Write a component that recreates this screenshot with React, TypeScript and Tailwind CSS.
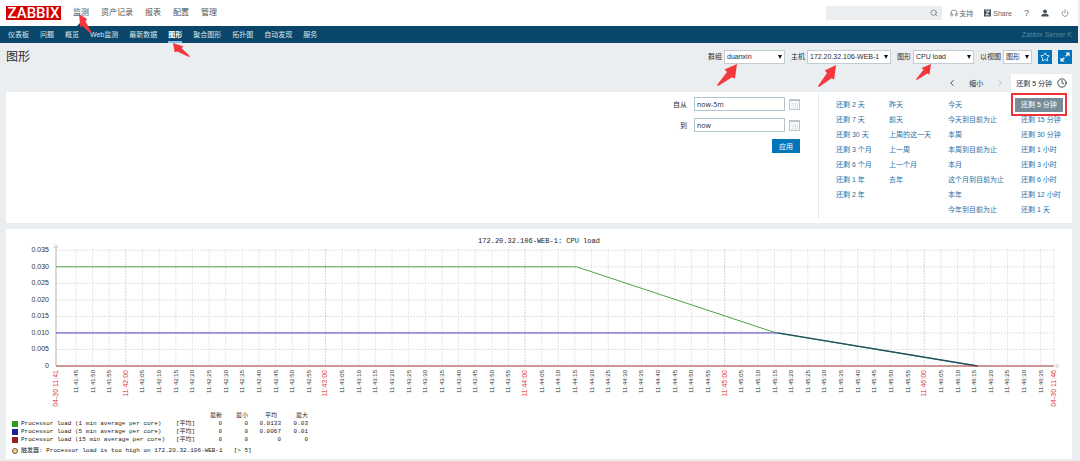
import { ChevronLeft, ChevronRight, Clock, Headphones, Power, Search, Star } from "lucide-react";
import type { ReactNode } from "react";

const MAIN_MENU = ["监测", "资产记录", "报表", "配置", "管理"];

const SUB_MENU = [
  "仪表板",
  "问题",
  "概览",
  "Web监测",
  "最新数据",
  "图形",
  "聚合图形",
  "拓扑图",
  "自动发现",
  "服务",
];

const RANGES = [
  ["还剩 2 天", "还剩 7 天", "还剩 30 天", "还剩 3 个月", "还剩 6 个月", "还剩 1 年", "还剩 2 年"],
  ["昨天", "前天", "上周的这一天", "上一周", "上一个月", "去年"],
  ["今天", "今天到目前为止", "本周", "本周到目前为止", "本月", "这个月到目前为止", "本年", "今年到目前为止"],
  ["还剩 5 分钟", "还剩 15 分钟", "还剩 30 分钟", "还剩 1 小时", "还剩 3 小时", "还剩 6 小时", "还剩 12 小时", "还剩 1 天"],
];

const RANGE_WIDTHS = ["w-[53px]", "w-[59px]", "w-[73px]", "w-[46px]"];

const SERIES = [
  { name: "Processor load (1 min average per core)", swatch: "bg-[#2f9a22]", values: ["0", "0", "0.0133", "0.03"] },
  { name: "Processor load (5 min average per core)", swatch: "bg-[#1f1f96]", values: ["0", "0", "0.0067", "0.01"] },
  { name: "Processor load (15 min average per core)", swatch: "bg-[#981c1c]", values: ["0", "0", "0", "0"] },
];

type ArrowProps = { className: string; flip?: boolean };

/** Red pointer laid over a control; the tip is in the upper right corner unless flipped */
function Arrow({ className, flip }: ArrowProps) {
  return (
    <svg viewBox="0 0 20 22" preserveAspectRatio="none" className={`pointer-events-none absolute z-10 ${className}`} aria-hidden="true">
      <path
        d="M20 0 L7.5 5.5 L10 8 L0 21 L1.2 22 L15 13.2 L18 14.500 Z"
        fill="#f2383c"
        transform={flip ? "translate(20 0) scale(-1 1)" : undefined}
      />
    </svg>
  );
}

type FieldProps = { id: string; label: string; value: string; width: string; children?: ReactNode };

function SelectField({ id, label, value, width, children }: FieldProps) {
  return (
    <div className="flex items-center gap-[2px]">
      <label htmlFor={id}>{label}</label>
      <div className={`relative ${width}`}>
        <select
          id={id}
          defaultValue={value}
          className="block h-[14px] w-full appearance-none border border-[#c3ccd0] bg-white pl-[2px] text-[7px] leading-[12px] text-[#1f2c33]"
        >
          <option>{value}</option>
        </select>
        <svg viewBox="0 0 4 4" className="pointer-events-none absolute top-[5px] right-[3px] size-1" aria-hidden="true">
          <path d="M0 0h4L2 4z" fill="#111" />
        </svg>
        {children}
      </div>
    </div>
  );
}

function CalendarIcon() {
  return (
    <svg viewBox="0 0 11 11" className="size-[11px]" aria-hidden="true">
      <rect x=".5" y=".5" width="10" height="10" fill="#fff" stroke="#bcc5ca" />
      <path d="M0 1.5h11" stroke="#bcc5ca" strokeWidth="1.5" />
      <path d="M2.5 4.8h6.5M2.5 6.8h6.5M2.5 8.8h6.5" stroke="#a9b4ba" strokeWidth=".8" strokeDasharray="1 .8" />
    </svg>
  );
}

function DateField({ id, label, value }: { id: string; label: string; value: string }) {
  return (
    <div className="flex items-center">
      <label htmlFor={id} className="w-[21px] pr-[7px] text-right whitespace-nowrap">
        {label}
      </label>
      <input
        id={id}
        defaultValue={value}
        className="h-[14px] w-[91px] border border-[#b3c6cf] bg-white px-[2px] font-['Open_Sans'] text-[7px] text-[#1f2c33]"
      />
      <button type="button" aria-label={label} className="ml-1">
        <CalendarIcon />
      </button>
    </div>
  );
}

function Header() {
  return (
    <header>
      <div className="flex h-[26px] items-center bg-white pr-[9px] pl-[6px]">
        <a href="#" className="flex h-[14px] w-[55px] items-center justify-center bg-[#d40000] font-['Roboto'] text-[15px] leading-[14px] font-medium text-white">
          ZABBIX
        </a>
        <nav className="ml-3 flex h-full gap-3 text-[8px] text-[#4b5459]">
          {MAIN_MENU.map((item, i) => (
            <a key={item} href="#" className="relative flex items-center">
              {item}
              {i === 0 && (
                <>
                  <svg viewBox="0 0 8 4" className="absolute bottom-0 left-1 h-1 w-2" aria-hidden="true">
                    <path d="M0 4 4 0l4 4z" fill="#0a466a" />
                  </svg>
                  <Arrow flip className="top-[14px] left-[6px] h-[20px] w-[13px]" />
                </>
              )}
            </a>
          ))}
        </nav>
        <div className="ml-auto flex items-center text-[7px] text-[#5c666b]">
          <div className="relative mr-2 w-[116px]">
            <input aria-label="搜索" className="block h-[14px] w-full bg-[#ebeef0] px-1" />
            <Search className="absolute top-[3px] right-[4px] size-2" />
          </div>
          <a href="#" className="flex items-center gap-px">
            <Headphones className="size-2" />
            支持
          </a>
          <a href="#" className="ml-[11px] flex items-center gap-px">
            <svg viewBox="0 0 8 8" className="size-2" aria-hidden="true">
              <rect y=".5" width="7" height="7" fill="#44545f" />
              <path d="M1.8 2.2h3.4L1.8 5.8h3.4" fill="none" stroke="#fff" />
            </svg>
            Share
          </a>
          <a href="#" className="ml-3 text-[9px]">
            ?
          </a>
          <a href="#" aria-label="用户" className="ml-3">
            <svg viewBox="0 0 8 8" className="size-2" fill="#44545f" aria-hidden="true">
              <circle cx="4" cy="2.4" r="1.9" />
              <path d="M.5 7.5V6.2Q.8 5 3 4.8h2Q7.200 5 7.500 6.200V7.500z" />
            </svg>
          </a>
          <a href="#" aria-label="退出" className="ml-3">
            <Power className="size-2" />
          </a>
        </div>
      </div>
      <nav className="flex h-[17px] items-stretch gap-[11px] bg-[#0a466a] pr-[6px] pl-2 text-[7px] text-[#d9e6ee]">
        {SUB_MENU.map((item) => (
          <a
            key={item}
            href="#"
            className={item === "图形" ? "relative flex items-center border-b-2 border-[#7fc0ee] pt-[2px] font-bold text-white" : "flex items-center"}
          >
            {item}
            {item === "图形" && <Arrow flip className="top-[17px] left-[5px] h-[14px] w-[17px]" />}
          </a>
        ))}
        <span className="ml-auto self-center text-[#5686a3]">Zabbix Server K</span>
      </nav>
    </header>
  );
}

function TitleBar() {
  return (
    <div className="flex h-[27px] items-center pl-[6px]">
      <h1 className="text-[12px] text-[#1f2c33]">图形</h1>
      <form className="ml-auto flex items-center gap-[6px] text-[7px]">
        <SelectField id="group" label="群组" value="duanxin" width="w-[61px]">
          <Arrow className="top-[14px] left-[-7px] h-[22px] w-[20px]" />
        </SelectField>
        <SelectField id="host" label="主机" value="172.20.32.106-WEB-1" width="w-[84px]">
          <Arrow className="top-[15px] left-[11px] h-[22px] w-[18px]" />
        </SelectField>
        <SelectField id="graph" label="图形" value="CPU load" width="w-[61px]">
          <Arrow className="top-[14px] left-[3px] h-[16px] w-[15px]" />
        </SelectField>
        <SelectField id="view" label="以视图" value="图形" width="w-[29px]" />
        <button type="button" aria-label="收藏" className="flex size-[14px] items-center justify-center bg-[#0275b8] text-white">
          <Star className="size-[10px]" />
        </button>
        <button type="button" aria-label="全屏" className="flex size-[14px] items-center justify-center bg-[#0275b8]">
          <svg viewBox="0 0 14 14" className="size-[14px]" aria-hidden="true">
            <path d="M7.500 2.500H11.500V6.500ZM2.500 7.500V11.500H6.500Z" fill="#fff" />
            <path d="M10.500 3.500 7.700 6.300M3.500 10.500 6.300 7.700" stroke="#fff" strokeWidth="1.300" />
          </svg>
        </button>
      </form>
    </div>
  );
}

function TimeFilter() {
  return (
    <section>
      <div className="flex h-[22px] items-end justify-end text-[7px]">
        <div className="flex h-[18px] items-center">
          <button type="button" aria-label="上一段">
            <ChevronLeft className="size-[10px]" />
          </button>
          <button type="button" className="mx-3">
            缩小
          </button>
          <button type="button" aria-label="下一段" className="text-[#b5bdc2]">
            <ChevronRight className="size-[10px]" />
          </button>
        </div>
        <button type="button" className="ml-[6px] flex h-[18px] items-center gap-[5px] bg-white px-[5px]">
          还剩 5 分钟
          <Clock className="size-[10px]" />
        </button>
      </div>
      <div className="flex justify-end bg-white pt-[2px] pr-[5px] pb-[5px] text-[7px]">
        <form className="flex flex-col gap-[7px] pt-[3px]">
          <DateField id="from" label="自从" value="now-5m" />
          <DateField id="to" label="到" value="now" />
          <button type="button" className="h-[14px] w-7 self-end bg-[#0275b8] text-white">
            应用
          </button>
        </form>
        <div className="ml-[18px] flex h-[124px] border-l border-[#e3e7e9] pt-[3px] pl-[17px]">
          {RANGES.map((column, c) => (
            <ul key={c} className={`${RANGE_WIDTHS[c]} whitespace-nowrap`}>
              {column.map((range) => (
                <li key={range} className="flex h-[15px] items-center">
                  {range === "还剩 5 分钟" ? (
                    <a href="#" className="relative -ml-[6px] flex h-[14px] items-center bg-[#768d99] px-[6px] text-white">
                      {range}
                      <span className="pointer-events-none absolute -inset-x-[4px] -top-[5px] -bottom-[4px] border-2 border-[#ee3338]" />
                    </a>
                  ) : (
                    <a href="#" className="text-[#1f6fa8]">
                      {range}
                    </a>
                  )}
                </li>
              ))}
            </ul>
          ))}
        </div>
      </div>
    </section>
  );
}

// Plot geometry, in the units of the chart's viewBox
const LEFT = 50;
const RIGHT = 1048;
const BASE = 137;
const STEP_Y = 16.53;
const START = 39; // seconds after 11:41:00
const SPAN = 300;

const toX = (seconds: number) => LEFT + ((seconds - START) * (RIGHT - LEFT)) / SPAN;
const toY = (load: number) => BASE - (load / 0.005) * STEP_Y;

const TICKS = Array.from({ length: 59 }, (_, i) => 45 + i * 5);

function tickLabel(seconds: number) {
  const minute = 41 + Math.floor(seconds / 60);
  return `11:${minute}:${String(seconds % 60).padStart(2, "0")}`;
}

function XLabel({ x, text, major }: { x: number; text: string; major: boolean }) {
  return (
    <text
      transform={`translate(${x + 2} 141) rotate(-90)`}
      textAnchor="end"
      className={major ? "fill-[#e03a3a] text-[7px]" : "fill-[#333] text-[6px]"}
    >
      {text}
    </text>
  );
}

function LoadChart() {
  const path = (points: number[][]) => points.map(([s, v]) => `${toX(s)},${toY(v)}`).join(" ");

  return (
    <svg viewBox="0 0 1066 183" className="block h-auto w-full" role="img" aria-label="CPU load">
      <text x="533" y="14" textAnchor="middle" className="fill-[#222] font-['Liberation_Mono'] text-[7px]">
        172.20.32.106-WEB-1: CPU load
      </text>

      {/* grid */}
      {Array.from({ length: 8 }, (_, i) => (
        <g key={i}>
          {i > 0 && <path d={`M${LEFT} ${toY(i * 0.005)}H${RIGHT}`} stroke="#d6d6d6" strokeWidth=".7" strokeDasharray="2 1" />}
          <text x="43" y={toY(i * 0.005) + 2} textAnchor="end" className="fill-[#333] text-[7px]">
            {i === 0 ? "0" : (i * 0.005).toFixed(3)}
          </text>
        </g>
      ))}
      {TICKS.map((s) => (
        <g key={s}>
          <path d={`M${toX(s)} 20V${BASE}`} stroke={s % 60 === 0 ? "#c2c2c2" : "#dadada"} strokeWidth=".7" strokeDasharray="2 1" />
          <XLabel x={toX(s)} text={tickLabel(s)} major={s % 60 === 0} />
        </g>
      ))}
      <path d={`M${RIGHT} 20V${BASE}`} stroke="#dadada" strokeWidth=".7" strokeDasharray="2 1" />
      <XLabel x={LEFT} text="04-30 11:41" major />
      <XLabel x={RIGHT} text="04-30 11:46" major />

      {/* axes */}
      <path d={`M${LEFT} 18V${BASE}`} stroke="#b5b5b5" />
      <path d="M48 18.500 50 15.500l2 3z" fill="#fff" stroke="#b5b5b5" strokeWidth=".6" />
      <path d="M1050 135l3 2-3 2z" fill="#fff" stroke="#b5b5b5" strokeWidth=".6" />

      {/* series */}
      <polyline points={path([[39, 0.03], [195.5, 0.03], [255.500, 0.01], [316, 0]])} fill="none" stroke="#45a845" />
      <polyline points={path([[39, 0.01], [256, 0.01]])} fill="none" stroke="#4a44c4" />
      <polyline points={path([[256, 0.01], [316, 0]])} fill="none" stroke="#1f4f66" strokeWidth="1.300" />
      <path d={`M${LEFT} ${BASE}H${RIGHT}`} stroke="#96302c" />
    </svg>
  );
}

function Legend() {
  return (
    <div className="px-[6px] pb-1 font-['Liberation_Mono','Noto_Sans_CJK_SC',monospace] text-[6px] leading-[8px] text-[#222]">
      <table className="w-[296px] table-fixed whitespace-nowrap">
        <thead>
          <tr className="h-2 text-right">
            <td className="w-[164px]" />
            <td className="w-5" />
            <th className="w-[26px] font-normal">最新</th>
            <th className="w-[26px] font-normal">最小</th>
            <th className="w-[33px] pr-1 font-normal">平均</th>
            <th className="w-[27px] font-normal">最大</th>
          </tr>
        </thead>
        <tbody>
          {SERIES.map((s) => (
            <tr key={s.name} className="h-2 text-right">
              <th className="text-left font-normal">
                <span className="flex items-center gap-[3px]">
                  <span className={`size-[6px] ${s.swatch}`} />
                  {s.name}
                </span>
              </th>
              <td className="text-left">[平均]</td>
              {s.values.map((v, i) => (
                <td key={i}>{v}</td>
              ))}
            </tr>
          ))}
        </tbody>
      </table>
      <div className="mt-[3px] flex items-center gap-[3px]">
        <svg viewBox="0 0 6 6" className="size-[6px]" aria-hidden="true">
          <circle cx="3" cy="3" r="2.500" fill="#ffd08a" stroke="#4a3a22" strokeWidth=".8" />
        </svg>
        <span>触发器: Processor load is too high on 172.20.32.106-WEB-1</span>
        <span className="ml-2">[&gt; 5]</span>
      </div>
    </div>
  );
}

export default function App() {
  return (
    <div className="min-h-screen bg-[#ebeef0] pr-[2px] font-['Liberation_Sans','Noto_Sans_CJK_SC',sans-serif] leading-none text-[#1f2c33]">
      <Header />
      <main className="pr-[6px] pb-[2px]">
        <TitleBar />
        <div className="pl-[6px]">
          <TimeFilter />
          <section className="mt-[6px] bg-white">
            <LoadChart />
            <Legend />
          </section>
        </div>
      </main>
    </div>
  );
}
